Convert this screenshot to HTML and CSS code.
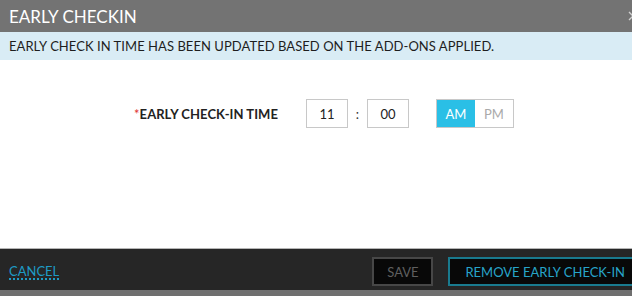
FILE: index.html
```html
<!DOCTYPE html>
<html>
<head>
<meta charset="utf-8">
<link rel="stylesheet" href="styles.css">
</head>
<body>
<div class="modal">
  <div class="modal-header">
    <span class="modal-title">EARLY CHECKIN</span>
    <span class="close">
      <svg width="10" height="10" viewBox="0 0 10 10"><path d="M1 1L9 9M9 1L1 9" stroke="#e8e8e8" stroke-width="1.4"/></svg>
    </span>
  </div>
  <div class="info-bar">EARLY CHECK IN TIME HAS BEEN UPDATED BASED ON THE ADD-ONS APPLIED.</div>
  <div class="modal-body">
    <div class="time-row">
      <label class="time-label"><span class="req">*</span>EARLY CHECK-IN TIME</label>
      <div class="time-inputs">
        <input class="time-box" type="text" value="11">
        <span class="colon">:</span>
        <input class="time-box" type="text" value="00">
      </div>
      <div class="ampm">
        <button class="ampm-btn active">AM</button>
        <button class="ampm-btn">PM</button>
      </div>
    </div>
  </div>
  <div class="modal-footer">
    <a class="cancel" href="#">CANCEL</a>
    <div class="actions">
      <button class="btn btn-save">SAVE</button>
      <button class="btn btn-remove">REMOVE EARLY CHECK-IN</button>
    </div>
  </div>
</div>
</body>
</html>
```
FILE: styles.css
```css
html, body {
  margin: 0;
  padding: 0;
}
body {
  background: #6f6f6f;
  font-family: Lato, "Open Sans", sans-serif;
  overflow: hidden;
  width: 632px;
  height: 296px;
}
.modal {
  width: 648px;
  background: #fff;
}
.modal-header {
  height: 32px;
  background: #737373;
  display: flex;
  align-items: center;
  justify-content: space-between;
  padding: 0 10px 0 9px;
  box-sizing: border-box;
}
.modal-title {
  color: #fff;
  font-size: 17px;
}
.close {
  display: flex;
  opacity: 0.8;
}
.info-bar {
  height: 28px;
  background: #d9ecf5;
  color: #1e1e1e;
  font-size: 13px;
  letter-spacing: 0.05px;
  display: flex;
  align-items: center;
  padding-left: 9px;
}
.modal-body {
  height: 189px;
  box-sizing: border-box;
  padding-top: 39px;
  border-bottom: 1px solid #b5b5b5;
}
.time-row {
  display: flex;
  justify-content: center;
  align-items: center;
  height: 29px;
  padding-left: 0;
}
.time-label {
  font-size: 13px;
  font-weight: 700;
  color: #222;
  letter-spacing: 0.05px;
  margin-right: 28px;
}
.req {
  color: #e0312f;
  font-weight: 400;
}
.time-inputs {
  display: flex;
  align-items: center;
}
.time-box {
  width: 42px;
  height: 29px;
  box-sizing: border-box;
  border: 1px solid #c8c8c8;
  text-align: center;
  font-family: Lato, sans-serif;
  font-size: 13px;
  color: #222;
  padding: 0;
  outline: none;
}
.colon {
  width: 19px;
  text-align: center;
  font-size: 13px;
  color: #333;
}
.ampm {
  display: flex;
  margin-left: 27px;
  border: 1px solid #c8c8c8;
}
.ampm-btn {
  width: 38px;
  height: 27px;
  border: 0;
  background: #fff;
  color: #aaa;
  font-family: Lato, sans-serif;
  font-size: 13px;
  padding: 0;
}
.ampm-btn.active {
  background: #2abfe6;
  color: #fff;
}
.modal-footer {
  background: #262626;
  height: 41px;
  box-sizing: border-box;
  display: flex;
  align-items: center;
  justify-content: space-between;
  padding: 4px 6px 0 9px;
}
.cancel {
  color: #1e9bc5;
  font-size: 13px;
  text-decoration: none;
  border-bottom: 2px dotted #1e9bc5;
  line-height: 14px;
}
.actions {
  display: flex;
  gap: 15px;
}
.btn {
  height: 29px;
  box-sizing: border-box;
  font-family: Lato, sans-serif;
  font-size: 13px;
  background: #080808;
  padding: 0 15px;
}
.btn-save {
  border: 2px solid #474747;
  color: #5f5f5f;
  width: 61px;
  padding: 0;
}
.btn-remove {
  border: 2px solid #197a8e;
  color: #27a4c9;
}
```
